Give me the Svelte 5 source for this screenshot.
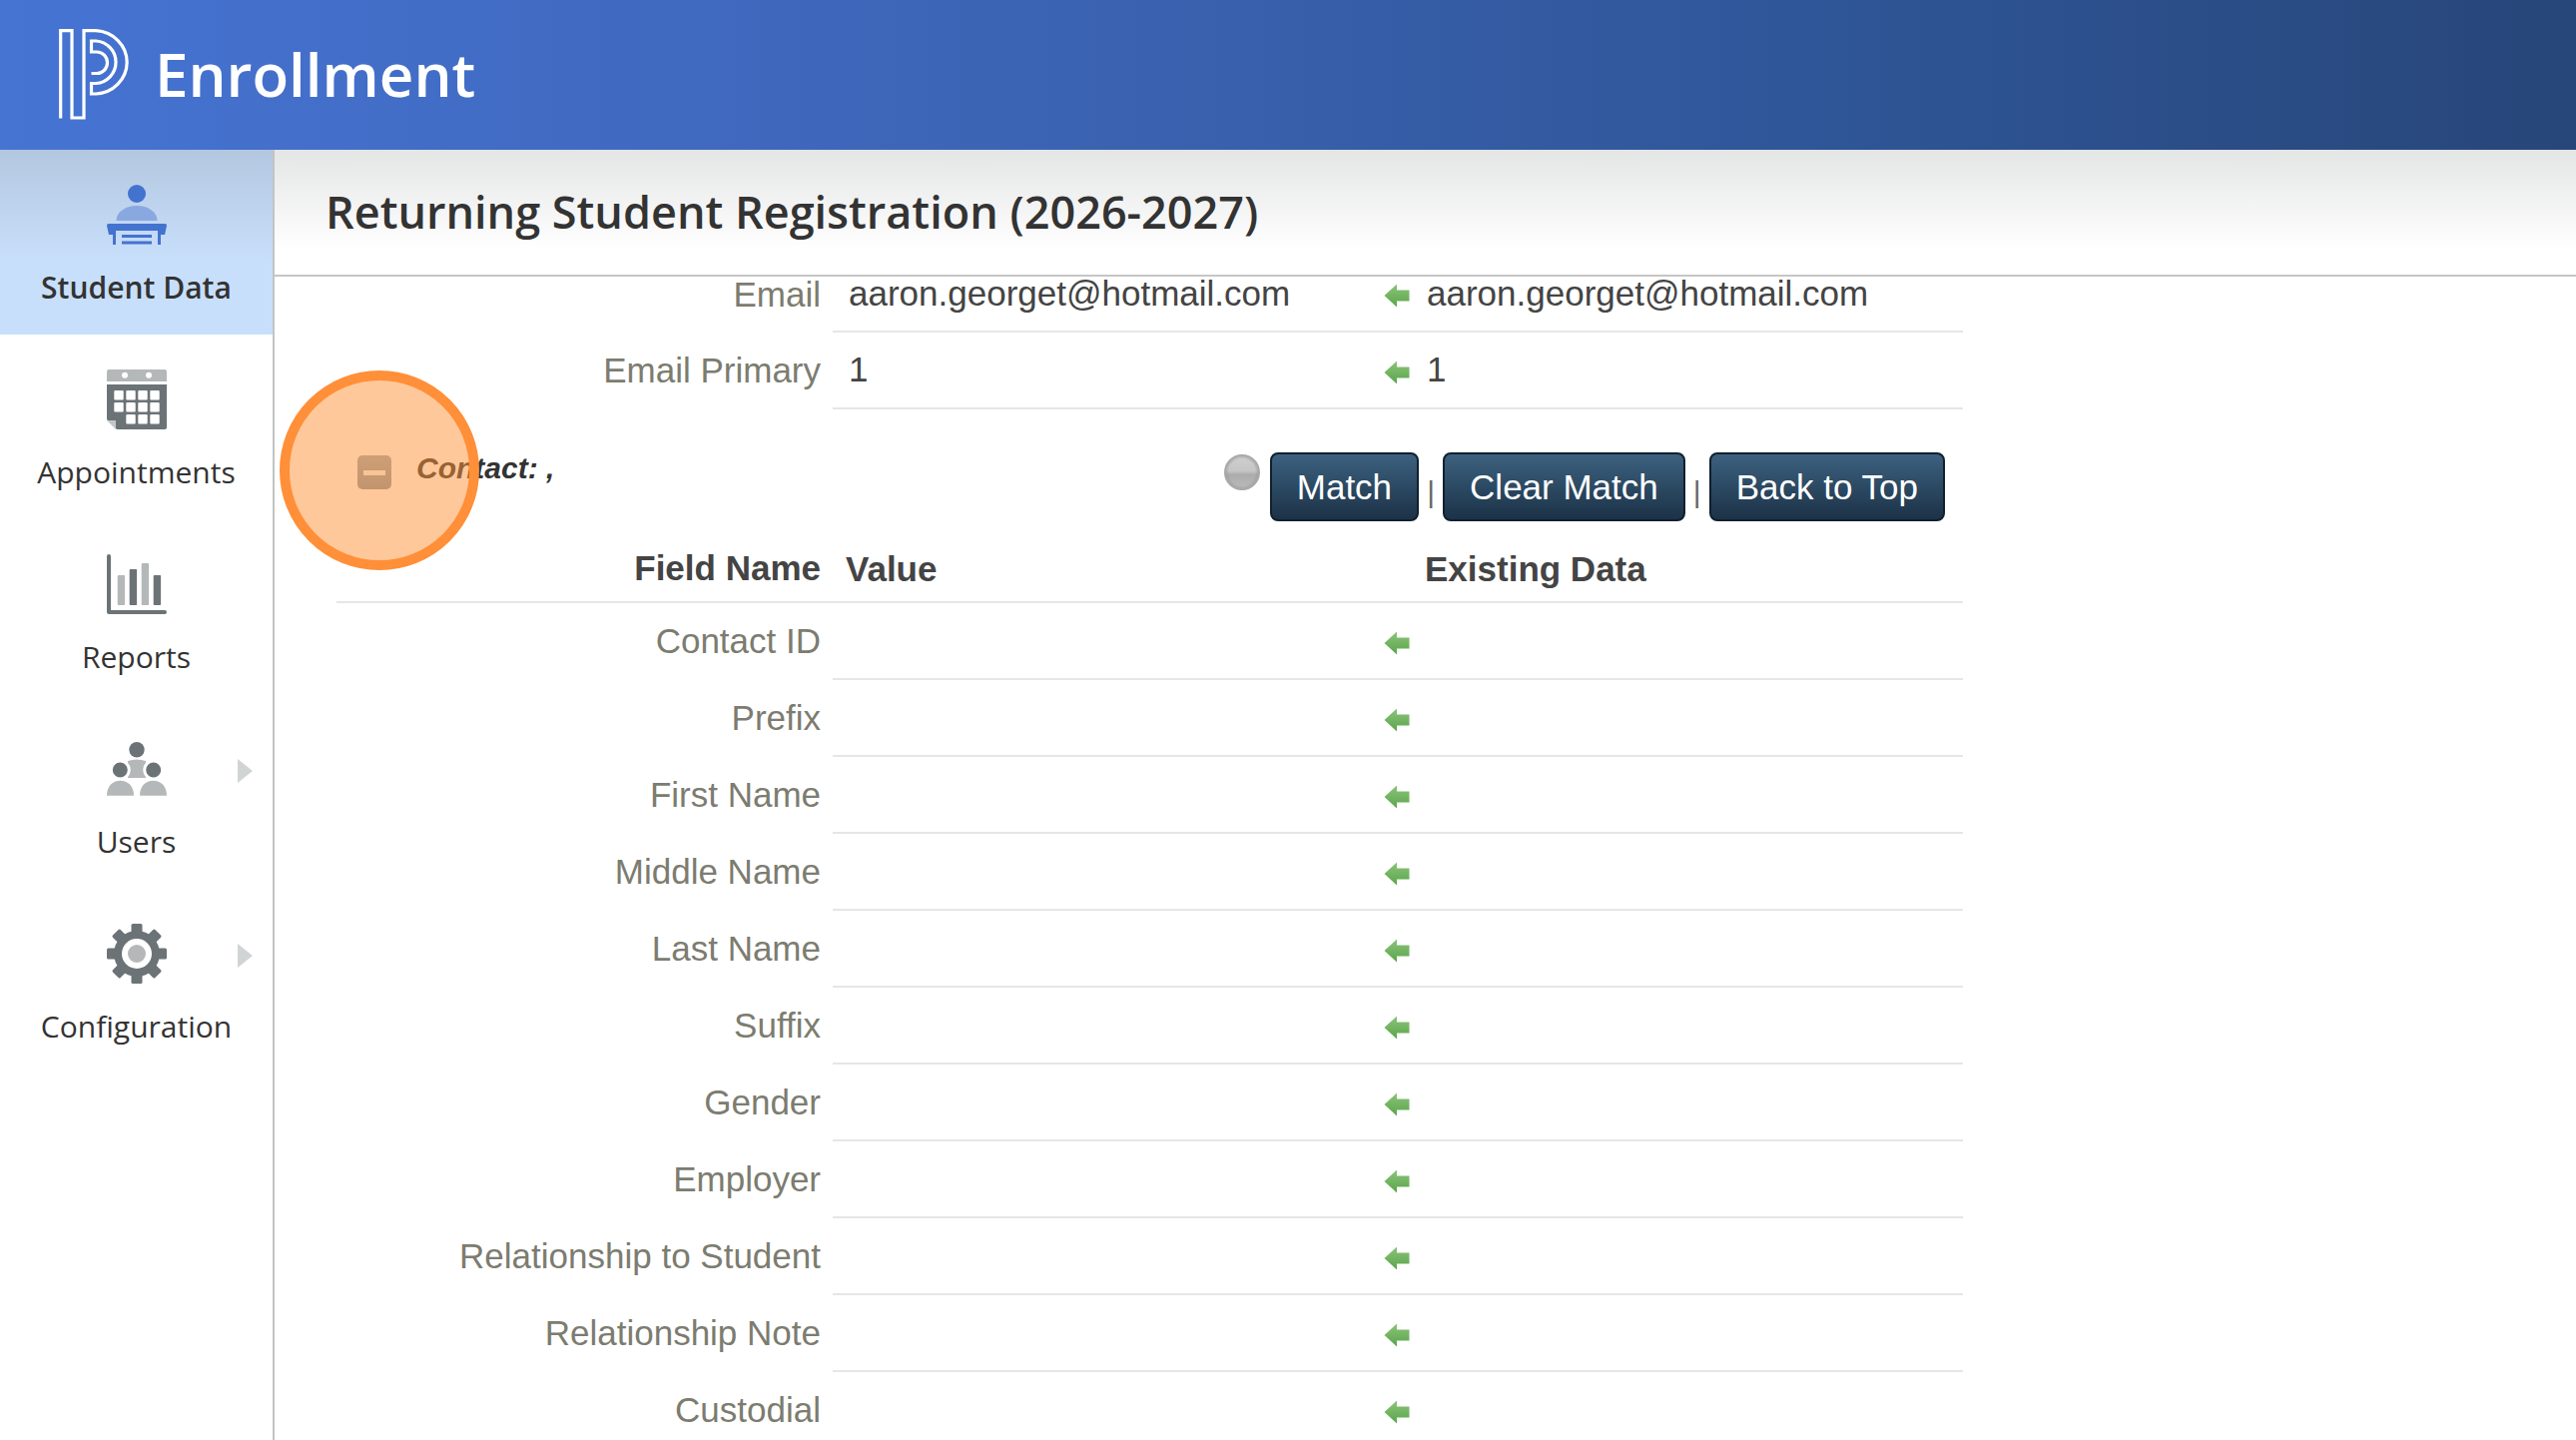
<script>
  const nav = [
    { label: 'Student Data', icon: 'student', active: true },
    { label: 'Appointments', icon: 'calendar' },
    { label: 'Reports', icon: 'reports' },
    { label: 'Users', icon: 'users', more: true },
    { label: 'Configuration', icon: 'gear', more: true }
  ];
  const fields = [
    'Contact ID', 'Prefix', 'First Name', 'Middle Name', 'Last Name', 'Suffix',
    'Gender', 'Employer', 'Relationship to Student', 'Relationship Note', 'Custodial'
  ];
  const calendarCells = [];
  for (const y of [21, 33, 45]) {
    for (const x of [7.3, 19.3, 31.3, 43.3]) {
      if (!(y === 45 && x === 7.3)) calendarCells.push({ x, y });
    }
  }
  const teeth = [0, 45, 90, 135, 180, 225, 270, 315];
</script>

{#snippet arrow()}
  <svg class="arrow" viewBox="0 0 26 24">
    <defs>
      <linearGradient id="arrowfill" x1="0" y1="0" x2="0" y2="1">
        <stop offset="0" stop-color="#8cc47a" />
        <stop offset="1" stop-color="#5aa54a" />
      </linearGradient>
    </defs>
    <path d="M0.5 12 L13 0.5 V6.5 H25.5 V17.5 H13 V23.5 Z" fill="url(#arrowfill)" />
  </svg>
{/snippet}

{#snippet row(label, value, existing)}
  <div class="row">
    <div class="label">{label}</div>
    <div class="cells">
      <div class="value">{value}</div>
      {@render arrow()}
      <div class="existing">{existing}</div>
    </div>
  </div>
{/snippet}

<div class="page">
  <header class="top">
    <svg class="logo" viewBox="0 0 90 110">
      <path d="M10.7 98.5 V10.7 H22 V98 H34 V10.7 H46 A33 31.7 0 0 1 46 74 H41.5 V63.5 H46 A21.5 21.3 0 0 0 46 21 H41.5 V32 H47 A10.5 10.75 0 0 1 47 53.5 H41.5" />
    </svg>
    <span class="app">Enrollment</span>
  </header>

  <div class="body">
    <nav class="side">
      {#each nav as item}
        <div class="item" class:active={item.active}>
          <svg class="icon" viewBox="0 0 60 60">
            {#if item.icon === 'student'}
              <circle cx="30" cy="9" r="9" fill="#4472cf" />
              <path d="M9.5 36 C9.5 27 19 21 30 21 S50.5 27 50.5 36 Z" fill="#8aa8e0" />
              <path d="M1.5 39 H58.5 Q60 39 60 41 L58 50 H54 V60 H51 V46 H9 V60 H6 V50 H2 L0 41 Q0 39 1.5 39 Z" fill="#4472cf" />
              <rect x="15" y="50" width="30" height="3" fill="#4472cf" />
              <rect x="15" y="56.5" width="30" height="3" fill="#4472cf" />
            {:else if item.icon === 'calendar'}
              <path d="M2 0 H58 Q60 0 60 2 V12 H0 V2 Q0 0 2 0 Z" fill="#b5b8b9" />
              <circle cx="18" cy="5.7" r="3" fill="#fff" />
              <circle cx="42" cy="5.7" r="3" fill="#fff" />
              <path d="M0 15 H60 V58 Q60 60 58 60 H10 L0 50 Z" fill="#6c7377" />
              <path d="M0 51 H9 V60 Z" fill="#c4c7c8" />
              {#each calendarCells as c}
                <rect x={c.x} y={c.y} width="9.4" height="9.4" rx="1" fill="#fff" />
              {/each}
            {:else if item.icon === 'reports'}
              <path d="M0 2 Q0 0 2 0 Q4 0 4 2 V56 H58 Q60 56 60 58 Q60 60 58 60 H2 Q0 60 0 58 Z" fill="#6c7377" />
              <rect x="10.7" y="21" width="7.4" height="30" rx="1" fill="#b5b8b9" />
              <rect x="22.7" y="15" width="7.4" height="36" rx="1" fill="#6c7377" />
              <rect x="34.7" y="9" width="7.4" height="42" rx="1" fill="#b5b8b9" />
              <rect x="46.7" y="21" width="7.4" height="30" rx="1" fill="#6c7377" />
            {:else if item.icon === 'users'}
              <circle cx="30" cy="10.7" r="7.7" fill="#6c7377" />
              <path d="M21 39 V22 Q30 19 39 22 V39 Z" fill="#b5b8b9" />
              <circle cx="13.3" cy="31" r="9" fill="#6c7377" stroke="#fff" stroke-width="3" />
              <circle cx="46.7" cy="31" r="9" fill="#6c7377" stroke="#fff" stroke-width="3" />
              <path d="M0 56.7 C0 47 6 41.7 13.5 41.7 S27 47 27 56.7 Z" fill="#b5b8b9" />
              <path d="M33 56.7 C33 47 39 41.7 46.5 41.7 S60 47 60 56.7 Z" fill="#b5b8b9" />
            {:else}
              {#each teeth as a}
                <rect x="24.5" y="0" width="11" height="14" rx="1.5" fill="#6c7377" transform="rotate({a} 30 30)" />
              {/each}
              <circle cx="30" cy="30" r="23" fill="#6c7377" />
              <circle cx="30" cy="30" r="15" fill="#fff" />
              <circle cx="30" cy="30" r="9" fill="#b5b8b9" />
            {/if}
          </svg>
          <span>{item.label}</span>
          {#if item.more}<i class="more"></i>{/if}
        </div>
      {/each}
    </nav>

    <main class="main">
      <div class="title"><h1>Returning Student Registration (2026-2027)</h1></div>

      <div class="table">
        <div class="first">
          {@render row('Email', 'aaron.georget@hotmail.com', 'aaron.georget@hotmail.com')}
        </div>
        {@render row('Email Primary', '1', '1')}

        <div class="contact">
          <div class="toggle">
            <span class="minus"><b></b></span>
            <em>Contact: ,</em>
          </div>
          <div class="actions">
            <span class="ball"></span>
            <button>Match</button>
            <span class="sep">|</span>
            <button>Clear Match</button>
            <span class="sep">|</span>
            <button>Back to Top</button>
          </div>
        </div>

        <div class="head">
          <div class="label">Field Name</div>
          <div class="h-value">Value</div>
          <div class="h-existing">Existing Data</div>
        </div>

        {#each fields as f}
          {@render row(f, '', '')}
        {/each}
      </div>

      <div class="spot"></div>
    </main>
  </div>
</div>

<style>
  :global(body) {
    margin: 0;
    background: #fff;
  }

  .page {
    width: 2580px;
    height: 1442px;
    overflow: hidden;
    display: flex;
    flex-direction: column;
    font-family: "Liberation Sans", Arial, sans-serif;
  }

  .top {
    height: 150px;
    flex: none;
    display: flex;
    align-items: center;
    background: linear-gradient(90deg, #4674d3 0%, #3f68bd 30%, #2f5698 70%, #274679 100%);
  }

  .logo {
    width: 90px;
    height: 110px;
    margin-left: 50px;
    fill: none;
    stroke: #fff;
    stroke-width: 3.2;
  }

  .app {
    margin-left: 15px;
    margin-bottom: 3px;
    font-family: "Open Sans", sans-serif;
    font-weight: 600;
    font-size: 60px;
    color: #fff;
    line-height: 1;
  }

  .body {
    flex: 1;
    display: flex;
    min-height: 0;
  }

  .side {
    width: 273px;
    flex: none;
    border-right: 2px solid #c2c4c4;
    font-family: "Open Sans", sans-serif;
  }

  .item {
    position: relative;
    height: 185px;
    box-sizing: border-box;
    padding-top: 35px;
    display: flex;
    flex-direction: column;
    align-items: center;
    font-size: 30px;
    color: #333;
  }

  .item span {
    margin-top: 22px;
    line-height: 41px;
  }

  .item.active {
    background: linear-gradient(#b4c7e0, #c8dffb 60%);
  }

  .item.active span {
    font-weight: 600;
  }

  .icon {
    width: 60px;
    height: 60px;
    flex: none;
  }

  .more {
    position: absolute;
    left: 238px;
    top: 55px;
    border-left: 15px solid #d0d4d4;
    border-top: 12px solid transparent;
    border-bottom: 12px solid transparent;
  }

  .main {
    position: relative;
    flex: 1;
    min-width: 0;
  }

  .title {
    position: relative;
    z-index: 1;
    height: 127px;
    box-sizing: border-box;
    padding-left: 51px;
    border-bottom: 2px solid #c6c6c6;
    background: linear-gradient(#e4e5e5, #fff 80%);
    display: flex;
    align-items: center;
  }

  h1 {
    margin: 0 0 2px;
    font-family: "Open Sans", sans-serif;
    font-weight: 600;
    font-size: 45px;
    color: #333;
  }

  .table {
    width: 1691px;
    font-size: 35px;
  }

  .first {
    margin-top: -21px;
  }

  .first .label,
  .first .value,
  .first .existing {
    padding-top: 3px;
  }

  .row {
    display: flex;
    height: 77px;
  }

  .label {
    width: 547px;
    flex: none;
    text-align: right;
    color: #7c7c70;
    align-self: center;
    padding-bottom: 2px;
  }

  .cells {
    flex: 1;
    margin-left: 12px;
    display: flex;
    align-items: center;
    border-bottom: 2px solid #e6e6e6;
    color: #444;
  }

  .value {
    width: 552px;
    padding-left: 16px;
    padding-bottom: 2px;
    box-sizing: border-box;
    flex: none;
  }

  .arrow {
    width: 26px;
    height: 24px;
    flex: none;
    margin-top: 4px;
  }

  .existing {
    margin-left: 17px;
    padding-bottom: 2px;
  }

  .contact {
    height: 120px;
    display: flex;
    justify-content: space-between;
    padding-right: 18px;
  }

  .toggle {
    display: flex;
    align-items: flex-start;
    padding-left: 83px;
    padding-top: 46px;
  }

  .minus {
    width: 34px;
    height: 34px;
    border-radius: 5px;
    background: linear-gradient(#a0adb8, #8898a6);
    display: flex;
    align-items: center;
    justify-content: center;
  }

  .minus b {
    width: 22px;
    height: 5px;
    background: #f4f4f4;
  }

  .toggle em {
    margin-left: 25px;
    margin-top: -4px;
    font-size: 30px;
    font-weight: 700;
    line-height: 34px;
    color: #333;
  }

  .actions {
    display: flex;
    align-items: flex-start;
    padding-top: 43px;
  }

  .ball {
    width: 36px;
    height: 36px;
    margin-top: 2px;
    margin-right: 10px;
    border-radius: 50%;
    border: 2px solid #a9a9a9;
    box-sizing: border-box;
    background: linear-gradient(#cfcfcf 0%, #c6c6c6 45%, #acacac 58%, #bbbbbb 100%);
    box-shadow: inset 0 0 3px #8f8f8f;
  }

  button {
    height: 69px;
    padding: 0 25px;
    border: 2px solid #10202f;
    border-radius: 8px;
    background: linear-gradient(#3c617f, #1c3247);
    color: #fff;
    font: inherit;
  }

  .sep {
    width: 24px;
    text-align: center;
    color: #666;
    font-size: 30px;
    line-height: 69px;
    padding-top: 5px;
  }

  .head {
    height: 74px;
    box-sizing: border-box;
    padding-top: 7px;
    display: flex;
    align-items: center;
    margin-left: 62px;
    border-bottom: 2px solid #e6e6e6;
    font-weight: 700;
    color: #444;
  }

  .head .label {
    width: 485px;
    color: #444;
  }

  .h-value {
    margin-left: 25px;
    width: 580px;
  }

  .spot {
    position: absolute;
    z-index: 2;
    left: 5px;
    top: 221px;
    width: 200px;
    height: 200px;
    box-sizing: border-box;
    border-radius: 50%;
    border: 10px solid #ff8f38;
    background: rgba(254, 145, 53, 0.5);
  }
</style>
